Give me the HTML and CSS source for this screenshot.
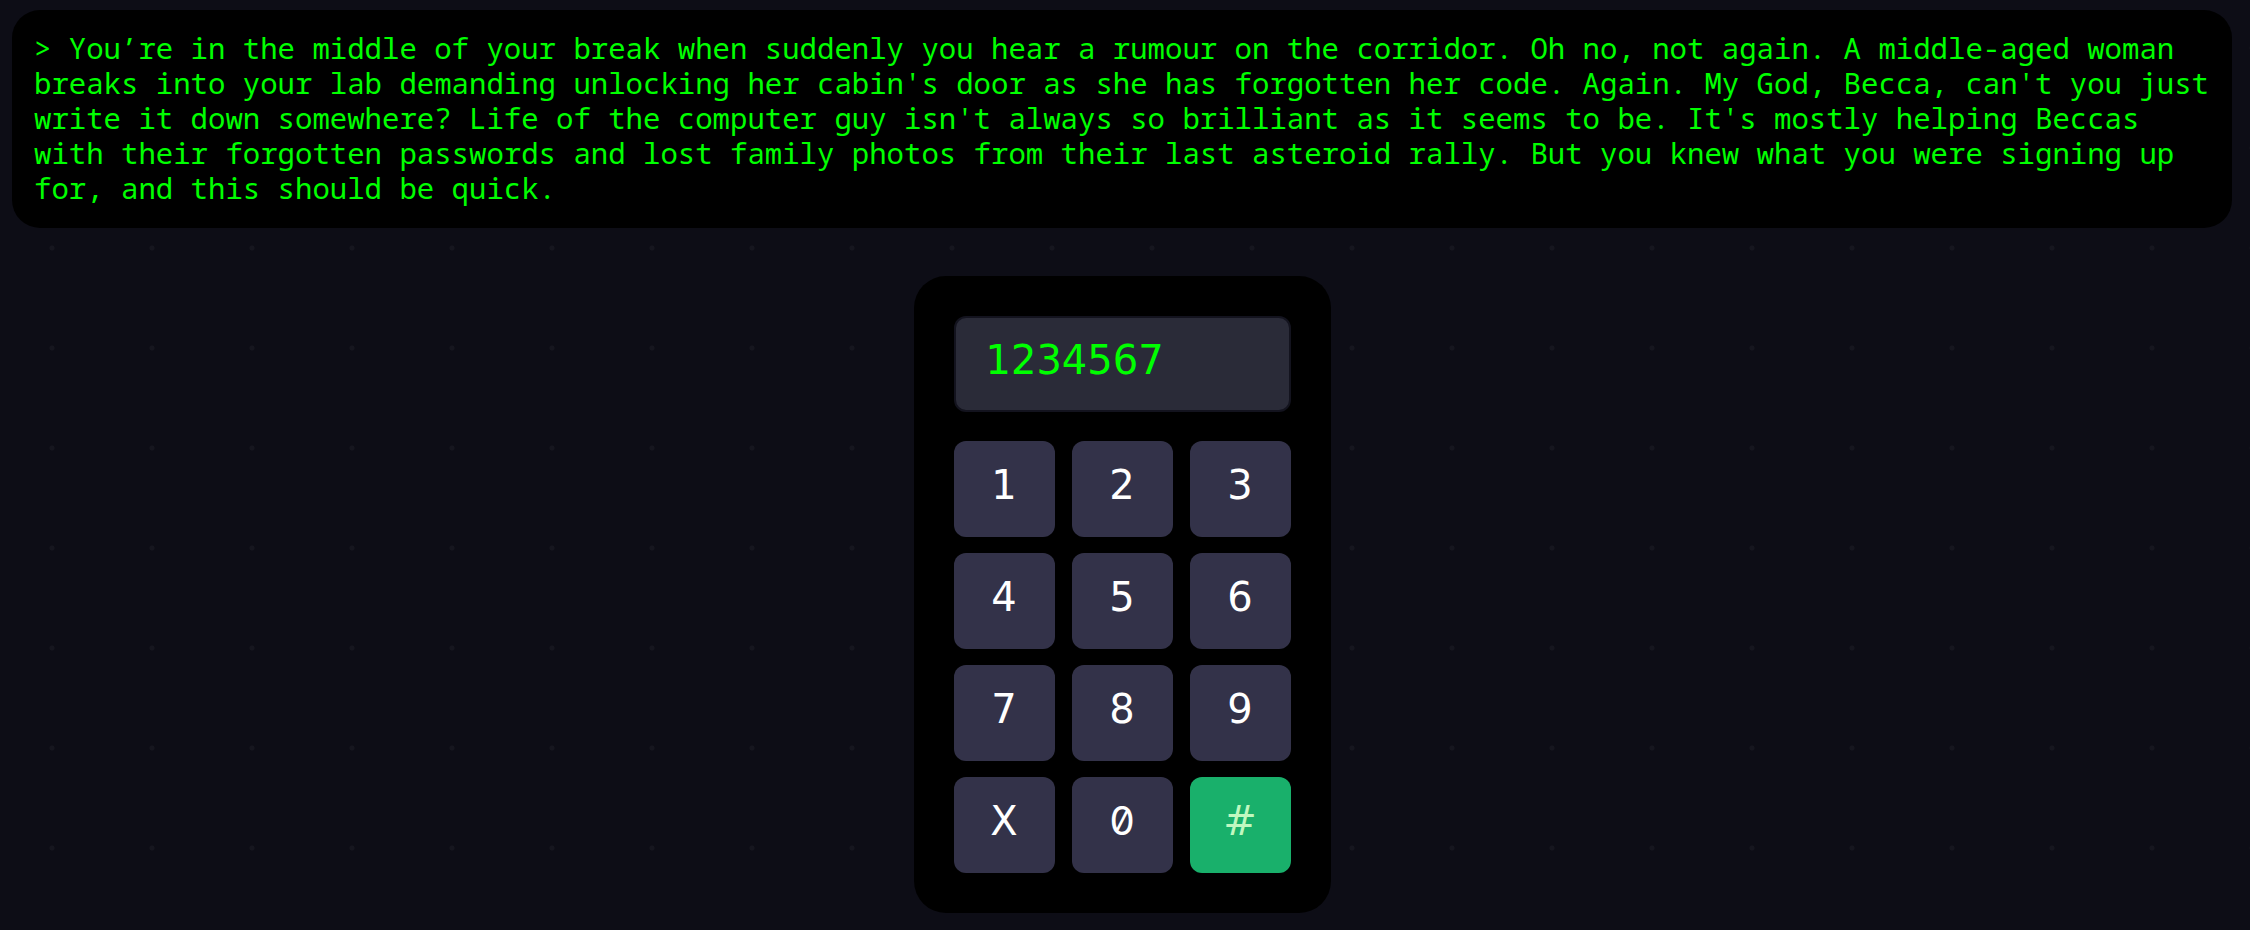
FILE: index.html
```html
<!DOCTYPE html>
<html lang="en">
<head>
<meta charset="utf-8">
<title>Door code</title>
<link rel="stylesheet" href="styles.css">
</head>
<body>
<main class="page">
  <p class="terminal">&gt; You’re in the middle of your break when suddenly you hear a rumour on the corridor. Oh no, not again. A middle-aged woman breaks into your lab demanding unlocking her cabin's door as she has forgotten her code. Again. My God, Becca, can't you just write it down somewhere? Life of the computer guy isn't always so brilliant as it seems to be. It's mostly helping Beccas with their forgotten passwords and lost family photos from their last asteroid rally. But you knew what you were signing up for, and this should be quick.</p>
  <form class="keypad">
    <input class="display" type="text" value="1234567" aria-label="Code" readonly>
    <div class="keys">
      <button class="key" type="button">1</button>
      <button class="key" type="button">2</button>
      <button class="key" type="button">3</button>
      <button class="key" type="button">4</button>
      <button class="key" type="button">5</button>
      <button class="key" type="button">6</button>
      <button class="key" type="button">7</button>
      <button class="key" type="button">8</button>
      <button class="key" type="button">9</button>
      <button class="key" type="button">X</button>
      <button class="key key-zero" type="button">0</button>
      <button class="key key-enter" type="button">#</button>
    </div>
  </form>
</main>
</body>
</html>
```
FILE: styles.css
```css
* {
  box-sizing: border-box;
}

body {
  margin: 0;
  min-height: 100vh;
  background-color: #0d0d16;
  background-image: radial-gradient(circle at 52px 48px, #16161f 2px, transparent 3px);
  background-size: 100px 100px;
}

.page {
  display: flex;
  flex-direction: column;
  align-items: center;
  gap: 48px;
  padding: 10px 18px 16px 12px;
}

.terminal {
  width: 100%;
  margin: 0;
  padding: 20px 22px 23px;
  border-radius: 28px;
  background: #000;
  color: #0f0;
  font: 29px/35px "Noto Sans Mono", "DejaVu Sans Mono", monospace;
}

.keypad {
  display: flex;
  flex-direction: column;
  gap: 29px;
  width: min-content;
  padding: 40px;
  border-radius: 32px;
  background: #000;
}

.display,
.key {
  font-family: "DejaVu Sans", Inter, sans-serif;
  font-size: 40px;
  font-weight: 400;
  line-height: 48px;
}

.display {
  width: 100%;
  min-width: 0;
  height: 96px;
  padding: 8px 30px 16px;
  border: 2px solid #13131e;
  border-radius: 12px;
  background: #2a2b38;
  color: #0f0;
}

.keys {
  display: grid;
  grid-template-columns: repeat(3, 101px);
  gap: 16px 17px;
}

.key {
  height: 96px;
  padding: 0 0 8px;
  border: 0;
  border-radius: 12px;
  background: #333249;
  color: #fff;
}

.key-zero {
  font-family: Inter, "DejaVu Sans", sans-serif;
  font-variant-numeric: slashed-zero;
}

.key-enter {
  background: #19b06b;
  color: #c0f8c0;
}
```
